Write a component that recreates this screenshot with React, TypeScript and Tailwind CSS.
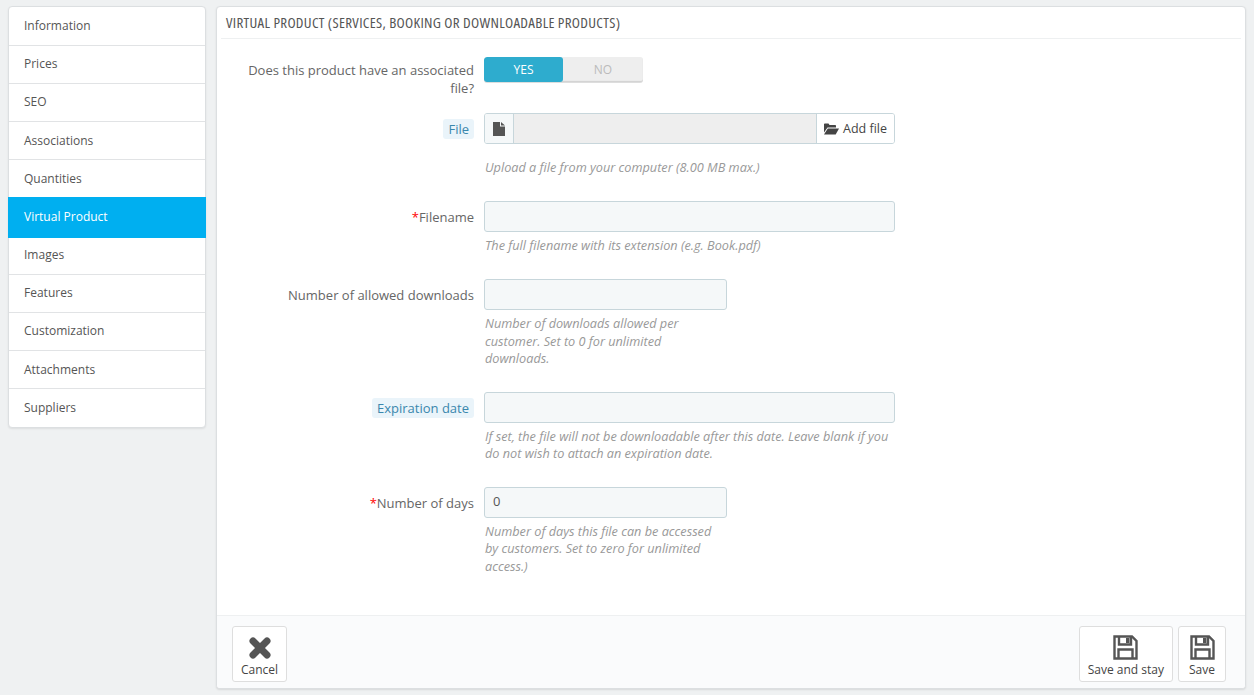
import React from 'react';
import { X } from 'lucide-react';

const tabs = ['Information', 'Prices', 'SEO', 'Associations', 'Quantities', 'Virtual Product', 'Images', 'Features', 'Customization', 'Attachments', 'Suppliers'];

function FileIcon() {
    return (
        <svg width="12" height="14" viewBox="0 0 12 14" fill="#555">
            <path d="M0 0h7v4.500h5V14H0z" />
            <path d="M8 0l4 3.500H8z" />
        </svg>
    );
}

function FolderIcon() {
    return (
        <svg width="15" height="13" viewBox="0 0 15 13" fill="#444">
            <path d="M0 1.500C0 .8.5.5 1 .5h3.500l1 1.500H11c.6 0 1 .4 1 1v1.500H3.500L0 9.500z" />
            <path d="M3.800 5.500H15l-3.300 6H0z" />
        </svg>
    );
}

function SaveIcon() {
    return (
        <svg width="25" height="25" viewBox="0 0 25 25" fill="none" stroke="#555" strokeWidth="2.400">
            <path d="M1.500 1.500h17.500l4.500 4.500v17.500h-22z" />
            <path d="M6 1.500v8h12v-8" />
            <path d="M5.500 23.500v-9h14v9" />
            <rect x="13" y="3" width="3.500" height="5" fill="#555" stroke="none" />
        </svg>
    );
}

function Label({ children, hint, required, className }: { children: React.ReactNode; hint?: boolean; required?: boolean; className?: string }) {
    return (
        <div className={`w-[257px] shrink-0 text-right leading-[18px] ${className ?? 'pt-[7px]'}`}>
            {required && <span className="text-[#f00]">*</span>}
            {hint ? (
                <span className="bg-[#eaf4fa] text-[#3a87ad] rounded-[3px] px-[5px] py-[1px]">{children}</span>
            ) : (
                children
            )}
        </div>
    );
}

function Help({ children, className }: { children: React.ReactNode; className?: string }) {
    return <p className={`italic text-[#999] text-[12.7px] leading-[17.5px] pl-[1px] ${className ?? ''}`}>{children}</p>;
}

function FooterButton({ icon, label }: { icon: React.ReactNode; label: string }) {
    return (
        <button className="h-[56px] min-w-[48px] px-[8px] border border-[#dedede] rounded-[3px] bg-white flex flex-col items-center pt-[7px] text-[12px] text-[#444]">
            <span className="h-[27px] flex items-center">{icon}</span>
            <span className="leading-[17px]">{label}</span>
        </button>
    );
}

const inputClass = 'h-[31px] bg-[#f5f8f9] border border-[#c7d6db] rounded-[3px]';

export default function App() {
    return (
        <div className="h-[695px] bg-[#eff1f2] flex items-start gap-[10px] px-[8px] pt-[6px] text-[13px] text-[#666] font-['Open_Sans',sans-serif]">
            <div className="w-[198px] shrink-0 pt-[0.4px] bg-white border border-[#dcdfe1] rounded-[4px] shadow-[0_1px_2px_rgba(0,0,0,0.08)]">
                {tabs.map((tab, i) => (
                    <div
                        key={tab}
                        className={`h-[38.200px] flex items-center pl-[15px] text-[12px] ${tab === 'Virtual Product' ? 'bg-[#00aff0] text-white shadow-[0_0_0_1px_#00aff0]' : `text-[#555] ${i < tabs.length - 1 && tabs[i + 1] !== 'Virtual Product' ? 'border-b border-[#e1e3e5]' : ''}`}`}
                    >
                        {tab}
                    </div>
                ))}
            </div>

            <div className="w-[1030px] h-[683px] bg-white border border-[#dcdfe1] rounded-[4px] shadow-[0_1px_2px_rgba(0,0,0,0.1)] flex flex-col overflow-hidden">
                <div className="mx-[4px] h-[32px] border-b border-[#eef0f1] flex items-center pl-[5px] text-[15px] tracking-[0.3px] text-[#555] font-medium [font-stretch:75%]">
                    VIRTUAL PRODUCT (SERVICES, BOOKING OR DOWNLOADABLE PRODUCTS)
                </div>

                <div className="flex-1">
                    <div className="flex gap-[10px] mt-[18px] h-[56px]">
                        <Label className="pl-[29px] pt-[4px]">Does this product have an associated file?</Label>
                        <div className="flex h-[26px] w-[159px] text-[12px] rounded-[3px] overflow-hidden shadow-[inset_0_-1px_1px_rgba(0,0,0,0.12)] bg-[#eeeeee] border-b border-[#ddd]">
                            <div className="w-[79px] bg-[#2eacce] text-white flex items-center justify-center rounded-[3px]">YES</div>
                            <div className="w-[80px] text-[#bbb] flex items-center justify-center">NO</div>
                        </div>
                    </div>

                    <div className="flex gap-[10px]">
                        <Label hint>File</Label>
                        <div className="w-[411px]">
                            <div className="h-[31px] flex border border-[#c7d6db] rounded-[3px] overflow-hidden">
                                <div className="w-[29px] bg-[#f5f8f9] border-r border-[#c7d6db] flex items-center justify-center"><FileIcon /></div>
                                <div className="flex-1 bg-[#eeeeee]"></div>
                                <div className="w-[78px] bg-white border-l border-[#c7d6db] flex items-center justify-center gap-[4px] pt-[1px] text-[12.5px] text-[#444]"><FolderIcon />Add file</div>
                            </div>
                            <Help className="mt-[15px]">Upload a file from your computer (8.00 MB max.)</Help>
                        </div>
                    </div>

                    <div className="flex gap-[10px] mt-[24px]">
                        <Label required>Filename</Label>
                        <div className="w-[411px]">
                            <div className={inputClass}></div>
                            <Help className="mt-[5px]">The full filename with its extension (e.g. Book.pdf)</Help>
                        </div>
                    </div>

                    <div className="flex gap-[10px] mt-[25px]">
                        <Label>Number of allowed downloads</Label>
                        <div className="w-[243px]">
                            <div className={inputClass}></div>
                            <Help className="mt-[5px] w-[235px]">Number of downloads allowed per customer. Set to 0 for unlimited downloads.</Help>
                        </div>
                    </div>

                    <div className="flex gap-[10px] mt-[24px]">
                        <Label hint>Expiration date</Label>
                        <div className="w-[411px]">
                            <div className={inputClass}></div>
                            <Help className="mt-[5px]">If set, the file will not be downloadable after this date. Leave blank if you do not wish to attach an expiration date.</Help>
                        </div>
                    </div>

                    <div className="flex gap-[10px] mt-[24px]">
                        <Label required>Number of days</Label>
                        <div className="w-[243px]">
                            <div className={`${inputClass} flex items-center pl-[8px] text-[#555]`}>0</div>
                            <Help className="mt-[5px] w-[235px]">Number of days this file can be accessed by customers. Set to zero for unlimited access.)</Help>
                        </div>
                    </div>
                </div>

                <div className="h-[73px] bg-[#fafbfc] border-t border-[#eef0f1] flex items-start justify-between pl-[15px] pr-[19px] pt-[10px]">
                    <FooterButton icon={<X size={28} strokeWidth={6} color="#555" />} label="Cancel" />
                    <div className="flex gap-[5px]">
                        <FooterButton icon={<SaveIcon />} label="Save and stay" />
                        <FooterButton icon={<SaveIcon />} label="Save" />
                    </div>
                </div>
            </div>
        </div>
    );
}
